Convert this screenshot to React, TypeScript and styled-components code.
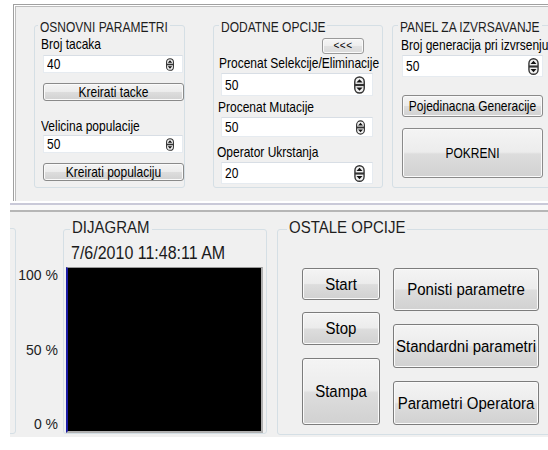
import React from "react";
import styled, { createGlobalStyle } from "styled-components";

const GlobalStyle = createGlobalStyle`
  html, body { margin: 0; padding: 0; background: #ffffff; }
  body { width: 548px; height: 450px; overflow: hidden; }
  #root { width: 548px; height: 450px; }
`;

const UI_FONT = `"Liberation Sans", Arial, sans-serif`;

const Screen = styled.div`
  width: 548px;
  height: 450px;
  display: flex;
  flex-direction: column;
  overflow: hidden;
  background: #ffffff;
  font-family: ${UI_FONT};
  color: #000;
`;

/* the classic dialog font is taller than it is wide; stretch glyphs vertically */
const Tall = styled.span<{ $s: number }>`
  display: inline-block;
  transform: scaleY(${(p) => p.$s});
  transform-origin: 50% 55%;
`;

/* ---------- upper parameter panel ---------- */

const TopFrame = styled.section`
  flex: none;
  margin: 4px 0 0 13px;
  height: 197px;
  box-sizing: border-box;
  border-top: 1px solid #a0a0a0;
  border-left: 1px solid #a0a0a0;
  box-shadow: inset 1px 1px 0 #ffffff, inset 2px 2px 0 #bcbcbc;
  background: #f0f0f0;
  display: flex;
  align-items: flex-start;
  overflow: hidden;
  font-size: 12px;
`;

const GroupBox = styled.fieldset<{ $w: number; $ml: number; $mt: number; $pb: number }>`
  flex: none;
  box-sizing: border-box;
  width: ${(p) => p.$w}px;
  min-width: 0;
  margin: ${(p) => p.$mt}px 0 0 ${(p) => p.$ml}px;
  padding: 0 0 ${(p) => p.$pb}px 0;
  border: 1px solid #d5dfe5;
  border-radius: 3px;
  display: flex;
  flex-direction: column;
  align-items: flex-start;
`;

const Legend = styled.legend<{ $ml: number; $pt: number; $pb: number; $lh: number }>`
  margin-left: ${(p) => p.$ml}px;
  padding: ${(p) => p.$pt}px 2px ${(p) => p.$pb}px;
  line-height: ${(p) => p.$lh}px;
  white-space: nowrap;
  color: #1e1e1e;
`;

const Caption = styled.div<{ $mt: number; $ml: number }>`
  margin: ${(p) => p.$mt}px 0 0 ${(p) => p.$ml}px;
  line-height: 16px;
  white-space: nowrap;
`;

const SpinBox = styled.div<{ $w: number; $h: number; $mt: number; $ml: number; $pr: number }>`
  flex: none;
  box-sizing: border-box;
  width: ${(p) => p.$w}px;
  height: ${(p) => p.$h}px;
  margin: ${(p) => p.$mt}px 0 0 ${(p) => p.$ml}px;
  padding: 0 ${(p) => p.$pr}px 0 3px;
  background: #ffffff;
  border: 1px solid #e6ebf0;
  border-top-color: #d8dee5;
  display: flex;
  align-items: center;
  justify-content: space-between;
  line-height: 16px;
`;

const PushButton = styled.button<{ $w: number; $h: number; $mt: number; $ml: number }>`
  flex: none;
  box-sizing: border-box;
  width: ${(p) => p.$w}px;
  height: ${(p) => p.$h}px;
  margin: ${(p) => p.$mt}px 0 0 ${(p) => p.$ml}px;
  padding: 0;
  font-family: inherit;
  font-size: inherit;
  line-height: 1;
  color: #000;
  white-space: nowrap;
  border: 1px solid #8a8a8a;
  border-radius: 3px;
  background: linear-gradient(#f4f4f4 0%, #ececec 48%, #dddddd 52%, #d1d1d1 100%);
  box-shadow: inset 0 0 0 1px #fafafa;
`;

const ArrowButton = styled(PushButton)`
  font-size: 10px;
  letter-spacing: 0.5px;
  border-color: #9a9a9a;
  background: linear-gradient(#f6f6f6 0%, #eeeeee 48%, #e2e2e2 52%, #dadada 100%);
`;

/* up/down arrows of a numeric field */
const SpinArrows = ({ w, h }: { w: number; h: number }) => (
  <svg width={w} height={h} viewBox="0 0 10 16" aria-hidden="true">
    <rect x="0.7" y="0.7" width="8.6" height="14.6" rx="4.3" fill="#f2f2f2" stroke="#333" strokeWidth="1.3" />
    <rect x="0.7" y="7" width="8.6" height="2" fill="#333" />
    <path d="M2.2 5.7 L5 2.7 L7.8 5.7 Z" fill="#111" />
    <path d="M2.2 10.3 L7.8 10.3 L5 13.3 Z" fill="#111" />
  </svg>
);

type FieldProps = { value: string; w: number; h: number; mt: number; ml: number; pr: number };

const NumberField = ({ value, w, h, mt, ml, pr }: FieldProps) => {
  const sh = h - 5;
  const sw = Math.round(sh * 0.62);
  return (
    <SpinBox $w={w} $h={h} $mt={mt} $ml={ml} $pr={pr}>
      <Tall $s={1.16}>{value}</Tall>
      <SpinArrows w={sw} h={sh} />
    </SpinBox>
  );
};

/* ---------- lower diagram / options panel ---------- */

const BottomArea = styled.section`
  flex: none;
  margin: 2px 0 0 10px;
  height: 234px;
  box-sizing: border-box;
  border-top: 2px solid #c9c9d8;
  background: linear-gradient(#f8f8f8 0 5px, #b6b6b6 5px 7px, #f0f0f0 7px);
  padding-top: 7px;
  display: flex;
  align-items: flex-start;
  overflow: hidden;
  font-size: 15px;
`;

const GroupStub = styled.div`
  flex: none;
  box-sizing: border-box;
  width: 60px;
  height: 206px;
  margin: 16px 0 0 -54px;
  border: 1px solid #d5dfe5;
  border-radius: 3px;
`;

const AxisColumn = styled.div`
  flex: none;
  width: 42px;
  height: 166px;
  margin-top: 55px;
  display: flex;
  flex-direction: column;
  justify-content: space-between;
  align-items: flex-end;
  font-size: 14px;
  line-height: 17px;
  color: #222;
`;

const Stamp = styled.div`
  margin: 6px 0 0 7px;
  font-size: 16px;
  line-height: 18px;
  white-space: nowrap;
  color: #1a1a1a;
`;

const Plot = styled.div`
  flex: none;
  box-sizing: border-box;
  width: 197px;
  height: 166px;
  margin: 4px 0 0 2px;
  background: #000000;
  border-top: 1px solid #9a9a9a;
  border-left: 2px solid #1c1ca6;
  border-right: 2px solid #b0b0b0;
  border-bottom: 2px solid #b0b0b0;
`;

const ButtonColumns = styled.div`
  display: flex;
  gap: 13px;
  margin: 29px 0 0 24px;
`;

const ButtonColumn = styled.div`
  display: flex;
  flex-direction: column;
`;

const BigButton = styled(PushButton)`
  border-color: #7c7c7c;
  font-size: 15px;
`;

const TOP = 1.16;
const LOW = 1.1;

export default function App() {
  return (
    <>
      <GlobalStyle />
      <Screen>
        <TopFrame>
          <GroupBox $w={151} $ml={20} $mt={11} $pb={6}>
            <Legend $ml={3} $pt={3} $pb={0} $lh={16}><Tall $s={TOP}>OSNOVNI PARAMETRI</Tall></Legend>
            <Caption $mt={1} $ml={6}><Tall $s={TOP}>Broj tacaka</Tall></Caption>
            <NumberField value="40" w={140} h={18} mt={3} ml={8} pr={8} />
            <PushButton $w={141} $h={18} $mt={10} $ml={8}><Tall $s={TOP}>Kreirati tacke</Tall></PushButton>
            <Caption $mt={17} $ml={6}><Tall $s={TOP}>Velicina populacije</Tall></Caption>
            <NumberField value="50" w={140} h={18} mt={1} ml={8} pr={8} />
            <PushButton $w={141} $h={18} $mt={10} $ml={8}><Tall $s={TOP}>Kreirati populaciju</Tall></PushButton>
          </GroupBox>

          <GroupBox $w={170} $ml={28} $mt={11} $pb={3}>
            <Legend $ml={5} $pt={3} $pb={0} $lh={16}><Tall $s={TOP}>DODATNE OPCIJE</Tall></Legend>
            <ArrowButton $w={42} $h={16} $mt={3} $ml={108}>&lt;&lt;&lt;</ArrowButton>
            <Caption $mt={1} $ml={5}><Tall $s={TOP}>Procenat Selekcije/Eliminacije</Tall></Caption>
            <NumberField value="50" w={152} h={23} mt={2} ml={7} pr={7} />
            <Caption $mt={3} $ml={4}><Tall $s={TOP}>Procenat Mutacije</Tall></Caption>
            <NumberField value="50" w={152} h={20} mt={2} ml={7} pr={7} />
            <Caption $mt={7} $ml={3}><Tall $s={TOP}>Operator Ukrstanja</Tall></Caption>
            <NumberField value="20" w={152} h={22} mt={2} ml={7} pr={7} />
          </GroupBox>

          <GroupBox $w={170} $ml={9} $mt={11} $pb={9}>
            <Legend $ml={5} $pt={3} $pb={0} $lh={16}><Tall $s={TOP}>PANEL ZA IZVRSAVANJE</Tall></Legend>
            <Caption $mt={2} $ml={8}><Tall $s={TOP}>Broj generacija pri izvrsenju</Tall></Caption>
            <NumberField value="50" w={141} h={22} mt={2} ml={9} pr={3} />
            <PushButton $w={141} $h={22} $mt={18} $ml={9}><Tall $s={TOP}>Pojedinacna Generacije</Tall></PushButton>
            <PushButton $w={141} $h={50} $mt={11} $ml={9}><Tall $s={TOP}>POKRENI</Tall></PushButton>
          </GroupBox>
        </TopFrame>

        <BottomArea>
          <GroupStub />
          <AxisColumn>
            <Tall $s={LOW}>100 %</Tall>
            <Tall $s={LOW}>50 %</Tall>
            <Tall $s={LOW}>0 %</Tall>
          </AxisColumn>

          <GroupBox $w={204} $ml={5} $mt={7} $pb={0}>
            <Legend $ml={6} $pt={0} $pb={3} $lh={17}><Tall $s={LOW}>DIJAGRAM</Tall></Legend>
            <Stamp><Tall $s={LOW}>7/6/2010 11:48:11 AM</Tall></Stamp>
            <Plot />
          </GroupBox>

          <GroupBox $w={290} $ml={10} $mt={7} $pb={9}>
            <Legend $ml={9} $pt={0} $pb={3} $lh={17}><Tall $s={LOW}>OSTALE OPCIJE</Tall></Legend>
            <ButtonColumns>
              <ButtonColumn>
                <BigButton $w={78} $h={32} $mt={0} $ml={0}><Tall $s={LOW}>Start</Tall></BigButton>
                <BigButton $w={78} $h={33} $mt={12} $ml={0}><Tall $s={LOW}>Stop</Tall></BigButton>
                <BigButton $w={78} $h={67} $mt={13} $ml={0}><Tall $s={LOW}>Stampa</Tall></BigButton>
              </ButtonColumn>
              <ButtonColumn>
                <BigButton $w={146} $h={43} $mt={0} $ml={0}><Tall $s={LOW}>Ponisti parametre</Tall></BigButton>
                <BigButton $w={146} $h={44} $mt={13} $ml={0}><Tall $s={LOW}>Standardni parametri</Tall></BigButton>
                <BigButton $w={146} $h={44} $mt={13} $ml={0}><Tall $s={LOW}>Parametri Operatora</Tall></BigButton>
              </ButtonColumn>
            </ButtonColumns>
          </GroupBox>
        </BottomArea>
      </Screen>
    </>
  );
}
